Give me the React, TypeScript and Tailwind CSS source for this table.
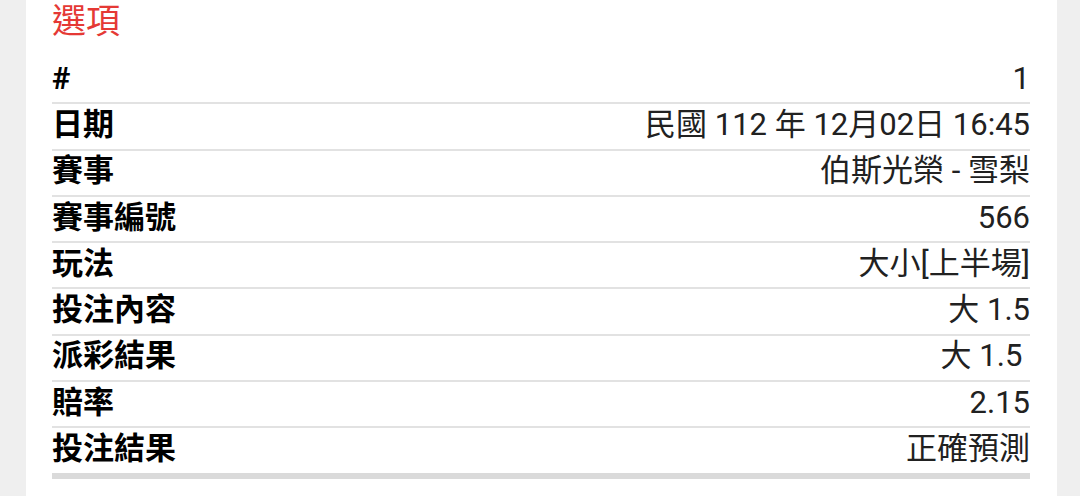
import React from "react";

const rows: [string, string][] = [
  ["#", "1"],
  ["日期", "民國 112 年 12月02日 16:45"],
  ["賽事", "伯斯光榮 - 雪梨"],
  ["賽事編號", "566"],
  ["玩法", "大小[上半場]"],
  ["投注內容", "大 1.5"],
  ["派彩結果", "大 1.5 "],
  ["賠率", "2.15"],
  ["投注結果", "正確預測"],
];

export default function App() {
  return (
    <div
      className="w-[1080px] h-[496px] bg-[#efefef] overflow-hidden"
      style={{ fontFamily: 'Roboto, "Noto Sans CJK TC", sans-serif' }}
    >
      <div className="ml-[26px] w-[1031px] h-full bg-white pl-[26px] pr-[27px]">
        <div className="h-[58px] pt-[4px] text-[34px] leading-[34px] text-[#e53935]">選項</div>
        {rows.map(([k, v], i) => (
          <div
            key={k}
            className={
              "flex items-center justify-between h-[46.3px] pb-[4px] " +
              (i === rows.length - 1
                ? "border-b-[6px] border-[#dadada] h-[50.3px]"
                : "border-b-2 border-[#e2e2e2]")
            }
          >
            <span className="text-[31px] leading-[31px] font-bold text-black">{k}</span>
            <span className="text-[31px] leading-[31px] text-[#212121] whitespace-pre">{v}</span>
          </div>
        ))}
      </div>
    </div>
  );
}
